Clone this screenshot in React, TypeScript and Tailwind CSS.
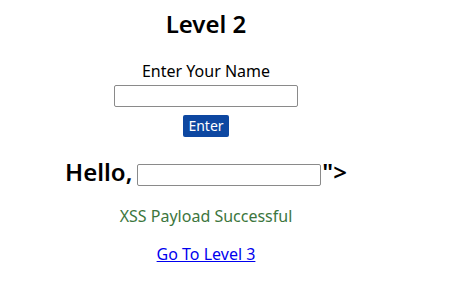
import React from "react";

function App() {
  return (
    <div className="w-[412px] flex flex-col items-center text-black font-['Noto_Sans',sans-serif]">
      <h2 className="mt-[9px] text-[24px] leading-[30px] font-semibold">Level 2</h2>
      <p className="mt-[22px] text-[16px] leading-[20px]">Enter Your Name</p>
      <input
        type="text"
        className="mt-[4px] w-[184px] h-[22px] border border-[#8a8a8a] rounded-[2px] outline-none"
      />
      <button className="mt-[8px] h-[22px] px-[5px] bg-[#0d47a1] text-white text-[14px] leading-[22px] rounded-[2px]">
        Enter
      </button>
      <div className="mt-[20px] flex items-start text-[24px] leading-[30px] font-semibold">
        <span>Hello,</span>
        <input
          type="text"
          className="mt-[7px] ml-[5px] w-[184px] h-[22px] border border-[#8a8a8a] rounded-[2px] outline-none"
        />
        <span className="ml-[1px]">"&gt;</span>
      </div>
      <p className="mt-[19px] text-[16px] leading-[20px] text-[#3c763d]">XSS Payload Successful</p>
      <a href="#" className="mt-[18px] text-[16px] leading-[20px] text-[#0000ee] underline">
        Go To Level 3
      </a>
    </div>
  );
}

export default App;
